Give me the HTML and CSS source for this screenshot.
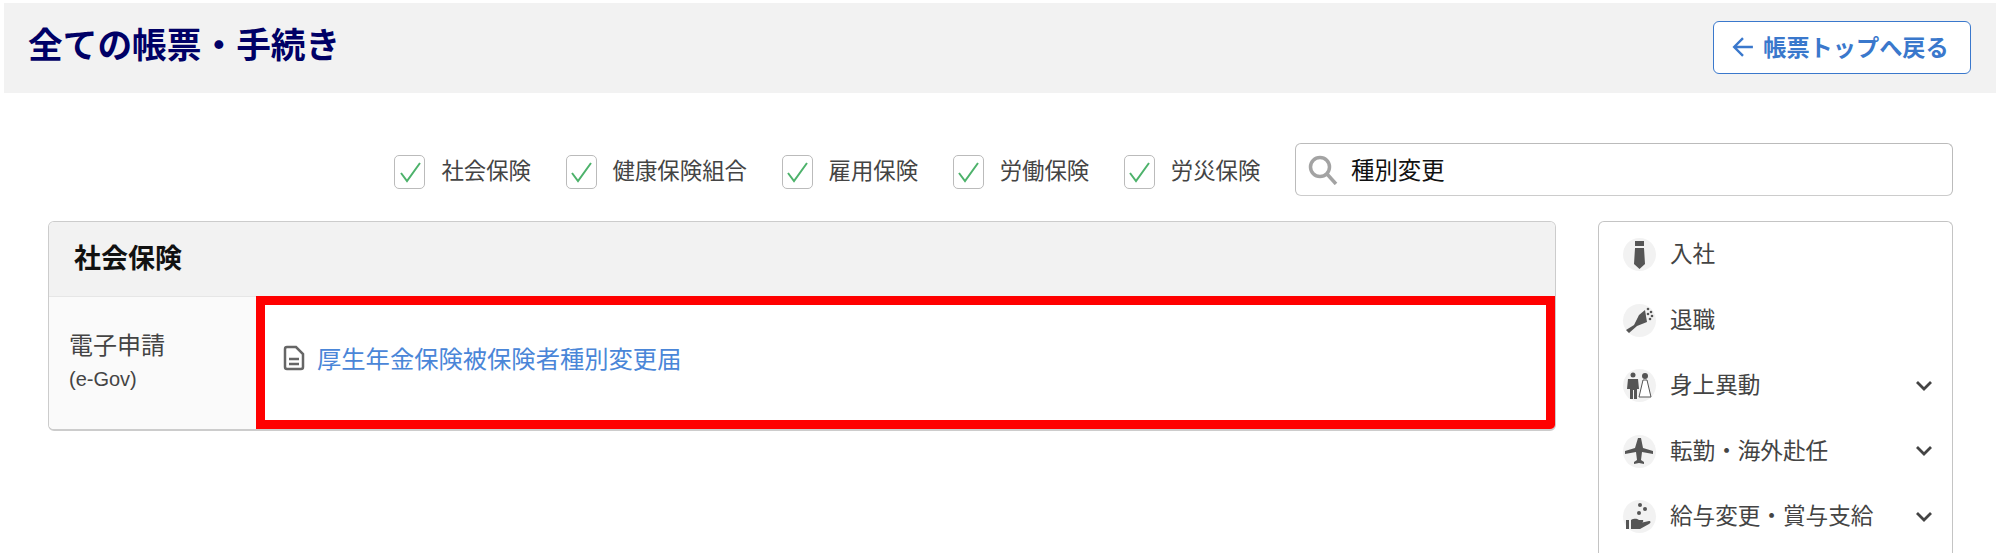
FILE: index.html
```html
<!DOCTYPE html>
<html lang="ja">
<head>
<meta charset="utf-8">
<title>全ての帳票・手続き</title>
<link rel="stylesheet" href="styles.css">
</head>
<body>
<header class="page-head">
  <h1 class="page-title">全ての帳票・手続き</h1>
  <a class="back-btn"><svg class="back-arrow" viewBox="0 0 20 20"><path d="M19 10H2M10 2l-8 8 8 8"/></svg>帳票トップへ戻る</a>
</header>
<div class="filters">
  <label class="check"><span class="box"><svg viewBox="0 0 24 24"><path d="M3 13l6 8L22 3"/></svg></span><span class="check-text">社会保険</span></label>
  <label class="check"><span class="box"><svg viewBox="0 0 24 24"><path d="M3 13l6 8L22 3"/></svg></span><span class="check-text">健康保険組合</span></label>
  <label class="check"><span class="box"><svg viewBox="0 0 24 24"><path d="M3 13l6 8L22 3"/></svg></span><span class="check-text">雇用保険</span></label>
  <label class="check"><span class="box"><svg viewBox="0 0 24 24"><path d="M3 13l6 8L22 3"/></svg></span><span class="check-text">労働保険</span></label>
  <label class="check"><span class="box"><svg viewBox="0 0 24 24"><path d="M3 13l6 8L22 3"/></svg></span><span class="check-text">労災保険</span></label>
  <div class="search">
    <svg class="search-icon" viewBox="0 0 30 30"><circle cx="12" cy="12" r="9.5"/><path d="M19 19l9 10"/></svg>
    <span class="search-text">種別変更</span>
  </div>
</div>
<div class="content">
  <section class="panel">
    <h2 class="panel-title">社会保険</h2>
    <div class="panel-row">
      <div class="row-label">電子申請<small>(e-Gov)</small></div>
      <div class="row-body">
        <svg class="doc-icon" viewBox="0 0 22 26"><path class="doc-outline" d="M2 4a2 2 0 0 1 2-2h9l7 7v13a2 2 0 0 1-2 2H4a2 2 0 0 1-2-2z"/><path class="doc-lines" d="M6 14h10M6 19h10"/></svg>
        <a class="doc-link">厚生年金保険被保険者種別変更届</a>
      </div>
    </div>
  </section>
  <nav class="side">
    <div class="side-item">
      <span class="side-icon"><svg viewBox="0 0 33 33"><path d="M12 3h9v5h-9zM12 10h9l1 16-5.500 5-5.500-5z"/></svg></span>
      <span class="side-label">入社</span>
    </div>
    <div class="side-item">
      <span class="side-icon"><svg viewBox="0 0 33 33"><path d="M3 26l8-5 5-10 6-5 2 12-10 4-8 7z"/><circle cx="25" cy="5" r="1.300"/><circle cx="28" cy="8" r="1.300"/><circle cx="29" cy="12" r="1.300"/><circle cx="27" cy="15" r="1.300"/><circle cx="25" cy="10" r="1.300"/></svg></span>
      <span class="side-label">退職</span>
    </div>
    <div class="side-item">
      <span class="side-icon"><svg viewBox="0 0 33 33"><circle cx="10" cy="6" r="2.500"/><path d="M5 10h10l1 10h-2v10h-3v-9h-1v9H7V20H4z"/><circle cx="22" cy="7" r="3"/><path d="M20 11h4l4 17H16z" fill="#fff" stroke="#555" stroke-width="1"/></svg></span>
      <span class="side-label">身上異動</span>
      <svg class="chev" viewBox="0 0 18 12"><path d="M2 2l7 7 7-7"/></svg>
    </div>
    <div class="side-item">
      <span class="side-icon"><svg viewBox="0 0 33 33"><path d="M15 3h3l2 10 10 3v3l-11-2-1 8 3 2v2l-5-1-5 1v-2l3-2-1-8-11 2v-3l10-3z"/></svg></span>
      <span class="side-label">転勤・海外赴任</span>
      <svg class="chev" viewBox="0 0 18 12"><path d="M2 2l7 7 7-7"/></svg>
    </div>
    <div class="side-item">
      <span class="side-icon"><svg viewBox="0 0 33 33"><circle cx="17" cy="5" r="2"/><circle cx="22" cy="9" r="2"/><circle cx="16" cy="13" r="2"/><path d="M3 20h3v9H3zM8 20c4-2 6-1 8 0h4c1 2-1 3-3 3l9-2c2 0 2 2 0 3l-9 5H8z"/></svg></span>
      <span class="side-label">給与変更・賞与支給</span>
      <svg class="chev" viewBox="0 0 18 12"><path d="M2 2l7 7 7-7"/></svg>
    </div>
  </nav>
</div>
</body>
</html>
```

FILE: styles.css
```css
* { box-sizing: border-box; }
html, body { height: 553px; overflow: hidden; }
body {
  margin: 0;
  padding: 3px 4px 0;
  background: #fff;
  color: #444;
  font-family: "Liberation Sans", "Noto Sans CJK JP", sans-serif;
}
.page-head {
  height: 90px;
  background: #f2f2f2;
  display: flex;
  align-items: center;
  justify-content: space-between;
  padding: 0 25px 0 24px;
}
.page-title {
  margin: 0 0 10px;
  font-size: 34.700px;
  font-weight: 700;
  color: #000066;
}
.back-btn {
  width: 258px;
  height: 53px;
  margin-bottom: 2px;
  border: 1.500px solid #3a78cc;
  border-radius: 6px;
  background: #fff;
  color: #3a78cc;
  font-size: 23.200px;
  font-weight: 700;
  display: flex;
  align-items: center;
  justify-content: center;
  gap: 9px;
  padding: 0 3px 3px 0;
}
.back-arrow { width: 22px; height: 22px; fill: none; stroke: #3a78cc; stroke-width: 2.200; margin-top: 3px; }
.filters {
  display: flex;
  align-items: center;
  justify-content: flex-end;
  gap: 34.600px;
  margin: 50px 43px 0 0;
  height: 53px;
}
.check { display: flex; align-items: center; gap: 16px; font-size: 22.400px; color: #444; }
.check-text { margin-bottom: 2px; }
.box {
  width: 31px;
  height: 34px;
  margin-top: 5px;
  border: 1px solid #bbb;
  border-radius: 5px;
  display: flex;
  align-items: center;
  justify-content: center;
}
.box svg { width: 24px; height: 24px; fill: none; stroke: #4db26b; stroke-width: 2; }
.search {
  width: 658px;
  height: 53px;
  border: 1px solid #bbb;
  border-bottom-color: #ccc;
  border-radius: 6px;
  display: flex;
  align-items: center;
  padding-left: 12px;
  gap: 13px;
}
.search-icon { width: 30px; height: 30px; fill: none; stroke: #a3a3a3; stroke-width: 3.500; }
.search-text { font-size: 23.400px; color: #111; margin-bottom: 2px; }
.content {
  display: flex;
  align-items: flex-start;
  gap: 42px;
  margin: 25px 43px 0 44px;
}
.panel {
  flex: 0 0 1508px;
  height: 210px;
  border: 1px solid #ccc;
  border-bottom-width: 2px;
  border-radius: 6px;
  overflow: hidden;
  display: flex;
  flex-direction: column;
}
.panel-title {
  margin: 0;
  height: 74px;
  flex: none;
  background: #f2f2f2;
  padding: 0 0 5px 25px;
  font-size: 27px;
  font-weight: 700;
  color: #111;
  display: flex;
  align-items: center;
}
.panel-row { display: flex; flex: 1; }
.row-label {
  width: 207px;
  background: #fafafa;
  border-top: 1px solid #e6e6e6;
  padding: 31px 0 0 20px;
  font-size: 24px;
  line-height: 36px;
  color: #444;
}
.row-label small { display: block; font-size: 20px; line-height: 30px; }
.row-body {
  flex: 1;
  border: 9px solid #ff0000;
  display: flex;
  align-items: center;
  padding: 0 0 10px 18px;
  gap: 12px;
}
.doc-icon { width: 22px; height: 26px; fill: none; stroke: #666; stroke-width: 2.500; }
.doc-link { font-size: 24.300px; color: #4a86d8; }
.side {
  flex: 1;
  height: 332px;
  border: 1px solid #c4c4c4;
  border-bottom: 0;
  border-radius: 6px 6px 0 0;
  padding: 0 19px 0 24px;
  overflow: hidden;
}
.side-item { display: flex; align-items: center; height: 65.500px; font-size: 22.600px; color: #444; }
.side-icon {
  width: 33px;
  height: 33px;
  flex: none;
  border-radius: 50%;
  background: #f2f2f2;
  margin-right: 14px;
}
.side-icon svg { display: block; width: 33px; height: 33px; fill: #555; }
.side-label { flex: 1; margin-bottom: 4px; }
.chev { width: 18px; height: 12px; fill: none; stroke: #444; stroke-width: 2.800; }
```
